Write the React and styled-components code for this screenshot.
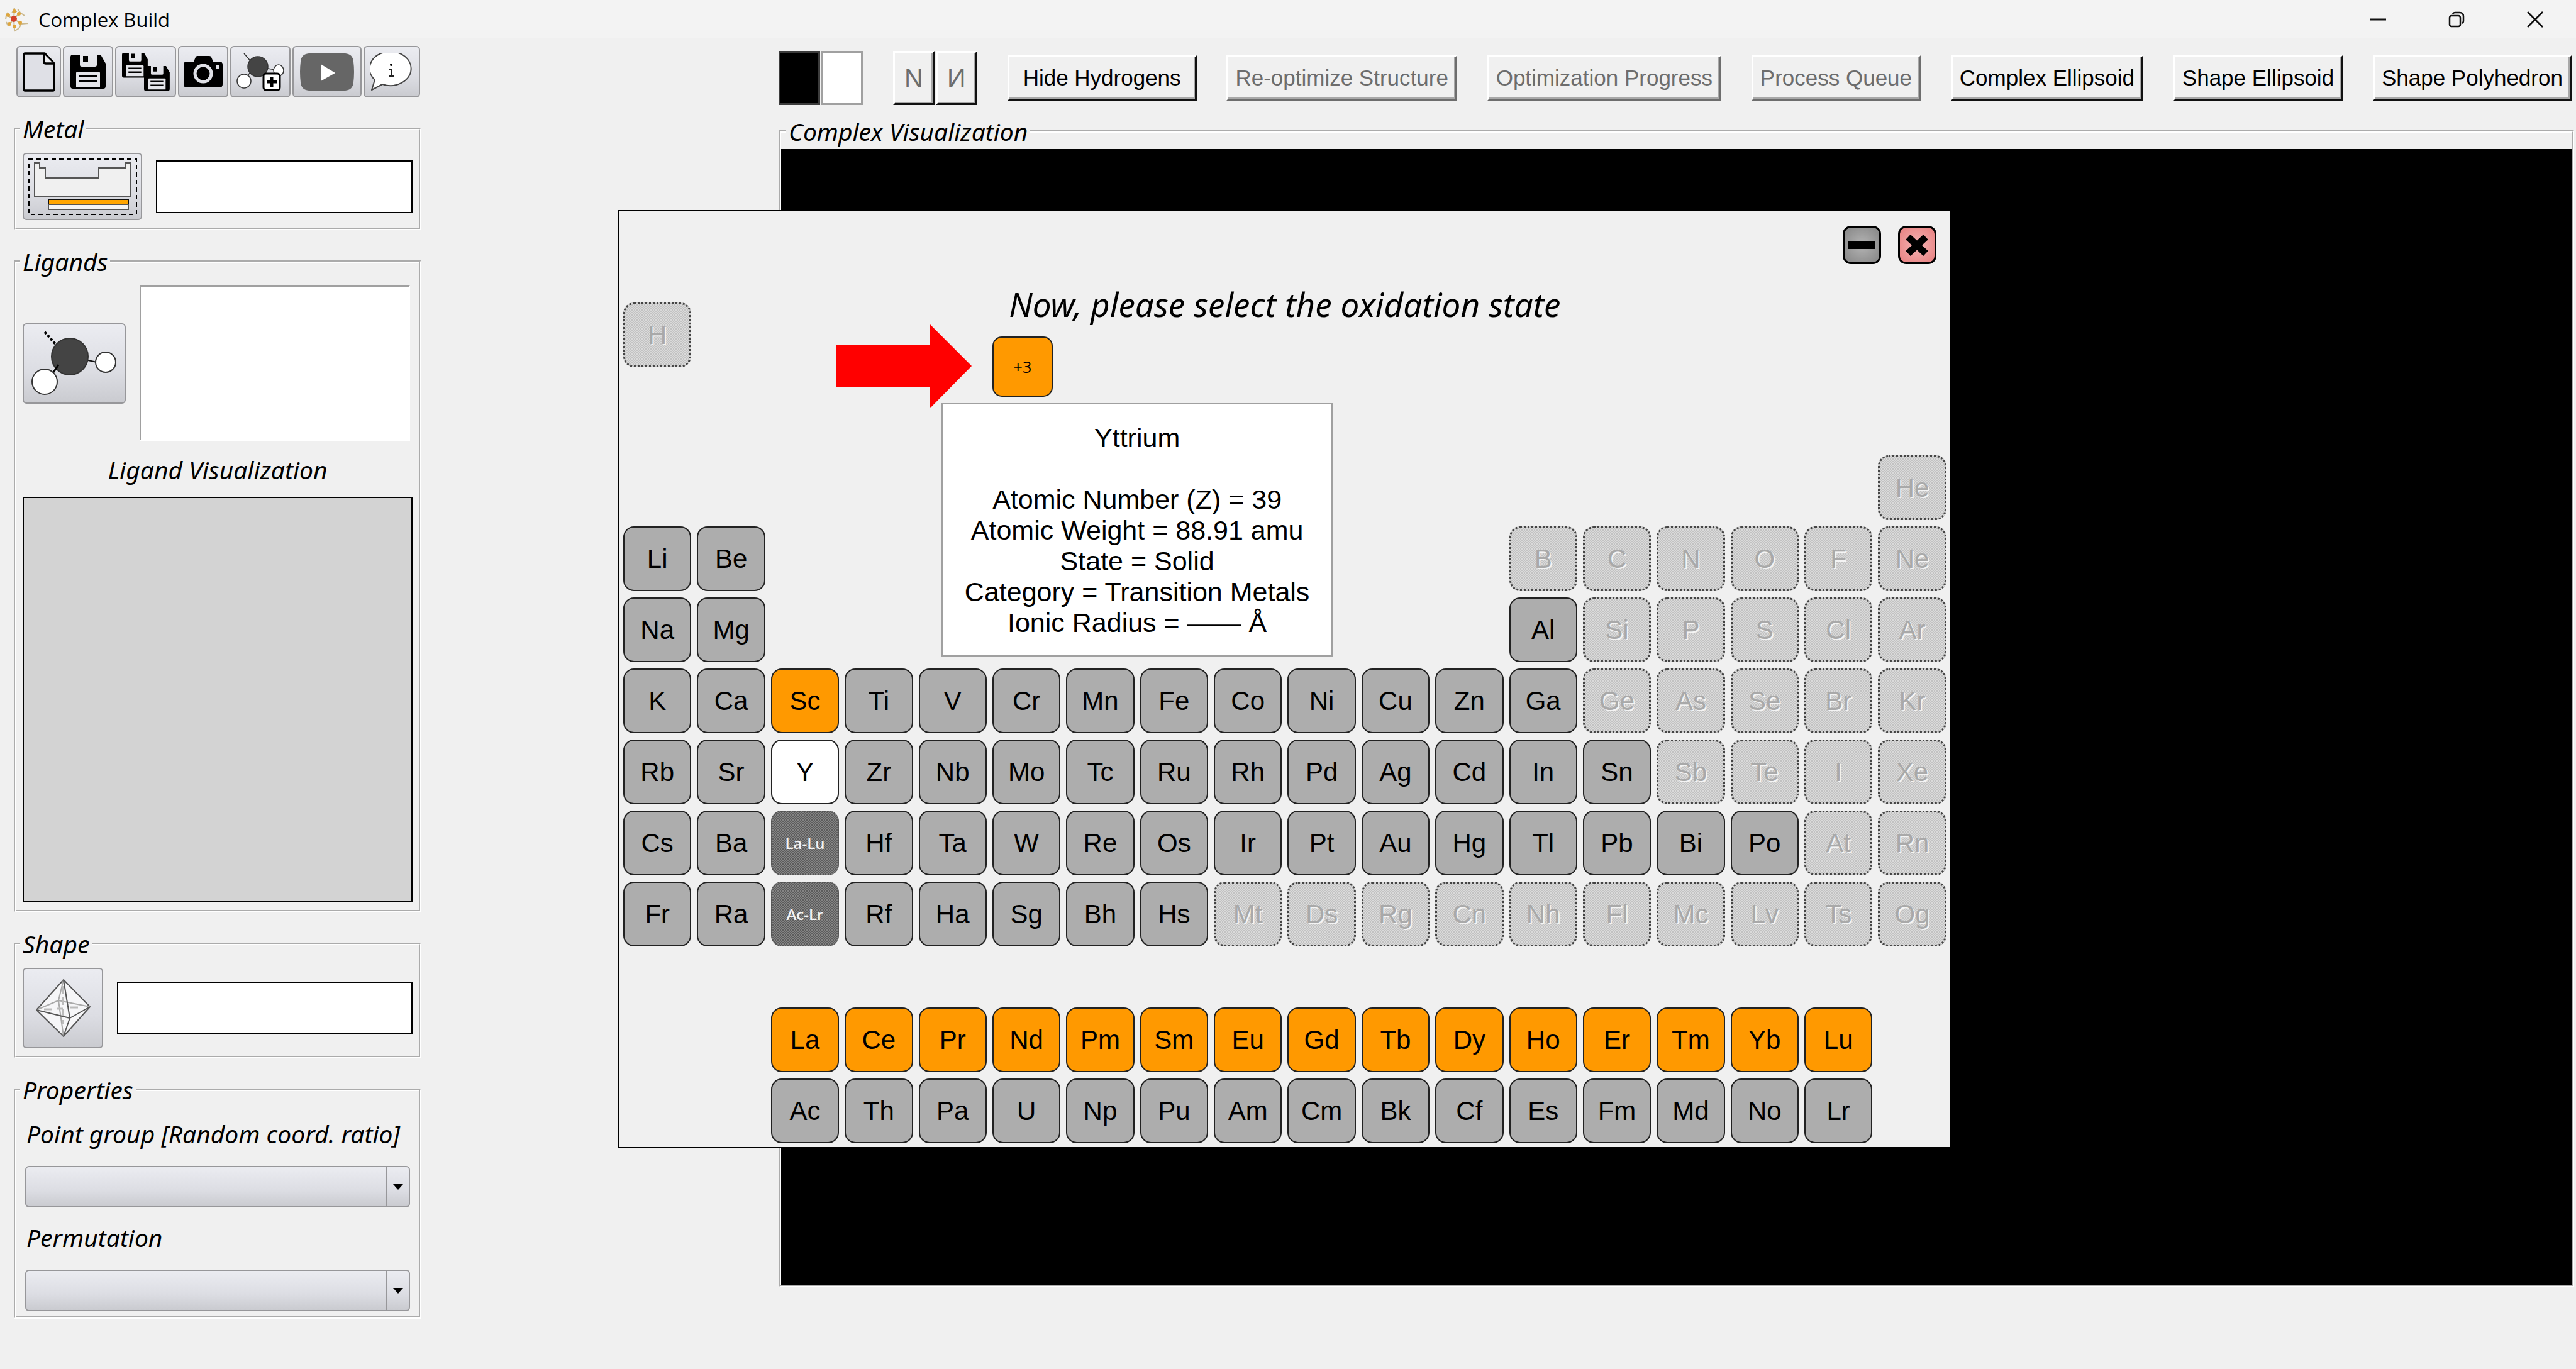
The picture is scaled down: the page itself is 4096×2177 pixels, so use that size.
import React from 'react'
import styled, { createGlobalStyle, css } from 'styled-components'

const sans = "'Liberation Sans', Arial, sans-serif"
const human = "'Open Sans', 'Noto Sans', sans-serif"
const slanted = "'Noto Sans', 'Open Sans', sans-serif"

const GlobalStyle = createGlobalStyle`
  * {
    box-sizing: border-box;
  }
  body {
    margin: 0;
    background: #f0f0f0;
    color: #000;
    font-family: ${sans};
  }
  button,
  input,
  select {
    margin: 0;
    font-family: inherit;
    color: inherit;
  }
`

const Page = styled.div`
  position: relative;
  display: flex;
  flex-direction: column;
  min-height: 100vh;
`

const TitleBar = styled.header`
  display: flex;
  align-items: center;
  height: 61px;
  padding: 0 52px 0 8px;
  background: #f3f3f3;
`

const AppTitle = styled.h1`
  flex: 1;
  margin: 0 0 0 15px;
  font: 400 31px/40px ${human};
`

const WindowControls = styled.div`
  display: flex;
  gap: 99px;
`

const WindowControl = styled.button`
  display: flex;
  padding: 0;
  border: 0;
  background: none;
`

const Body = styled.div`
  display: flex;
  flex: 1;
  gap: 568px;
  padding: 12px 3px 72px 22px;
`

const Sidebar = styled.aside`
  flex: 0 0 648px;
  min-width: 0;
`

const Toolbar = styled.div`
  display: flex;
  gap: 3px;
  padding: 0 2px 0 4px;
`

const silver = css`
  border: 2px solid #97979a;
  border-radius: 6px;
  background: linear-gradient(#ebecf1, #dcdde3 60%, #cacbd0);
`

const ToolButton = styled.button`
  display: flex;
  flex: none;
  align-items: center;
  justify-content: center;
  width: ${({ $width }) => $width}px;
  height: ${({ $height }) => $height || 82}px;
  padding: 0;
  ${silver}
`

const Group = styled.fieldset`
  min-width: 0;
  margin: 28px 0 0;
  padding: 16px 10px 12px;
  border: 4px groove #fff;
`

const PropertiesGroup = styled(Group)`
  padding: 0 10px 8px;
`

const Legend = styled.legend`
  margin-left: -4px;
  padding: 0 4px;
  font: italic 400 39px/44px ${slanted};
`

const Row = styled.div`
  display: flex;
  align-items: center;
  gap: 22px;
`

const TextBox = styled.input`
  flex: 1;
  min-width: 0;
  height: 84px;
  padding: 0 12px;
  border: 2px solid #000;
  background: #fff;
  font-size: 38px;
`

const LigandList = styled.div`
  flex: 1;
  height: 247px;
  margin-right: 4px;
  border: 2px solid #fff;
  border-top-color: #a0a0a0;
  border-left-color: #a0a0a0;
  background: #fff;
`

const Caption = styled.p`
  margin: 24px 0 21px;
  text-align: center;
  font: italic 400 39px/44px ${slanted};
`

const LigandCanvas = styled.div`
  height: 645px;
  border: 2px solid #000;
  background: #d3d3d3;
`

const FieldLabel = styled.label`
  display: block;
  padding: 26px 6px 29px;
  font: italic 400 39px/44px ${slanted};
`

const SelectWrap = styled.div`
  position: relative;
  margin: 0 4px;
`

const Select = styled.select`
  display: block;
  width: 100%;
  height: 66px;
  padding: 0 46px 0 12px;
  appearance: none;
  font-size: 38px;
  ${silver}
`

const SelectArrow = styled.span`
  position: absolute;
  top: 2px;
  right: 2px;
  bottom: 2px;
  display: flex;
  align-items: center;
  justify-content: center;
  width: 36px;
  border-left: 2px solid #97979a;
  pointer-events: none;

  &::after {
    content: '';
    border: 8px solid transparent;
    border-top: 9px solid #000;
    border-bottom: 0;
  }
`

const Main = styled.main`
  display: flex;
  flex: 1;
  flex-direction: column;
  min-width: 0;
  margin-bottom: 58px;
`

const ViewToolbar = styled.div`
  display: flex;
  align-items: center;
  justify-content: space-between;
  padding: 8px 4px 0 0;
`

const ButtonPair = styled.div`
  display: flex;
  gap: 2px;
`

const Swatch = styled.button`
  width: 66px;
  height: 86px;
  padding: 0;
  border: 3px solid ${({ $color }) => ($color === '#000' ? '#3c3c3c' : '#a0a0a0')};
  background: ${({ $color }) => $color};
`

const RaisedButton = styled.button`
  height: ${({ $tall }) => ($tall ? 86 : 72)}px;
  padding: 0 ${({ $pad }) => $pad || 11}px;
  border: solid;
  border-width: 3px;
  border-color: #fff #111 #111 #fff;
  background: #f0f0f0;
  box-shadow: inset -2px -2px #a8a8a8;
  font-size: ${({ $tall }) => ($tall ? 41 : 35)}px;
  white-space: nowrap;

  &:disabled {
    border-color: #fff #6d6d6d #6d6d6d #fff;
    color: #6d6d6d;
  }
`

const FlipButton = styled(RaisedButton)`
  width: 66px;
  padding: 0;
  color: #6d6d6d;
`

const ViewGroup = styled(Group)`
  display: flex;
  flex: 1;
  flex-direction: column;
  margin-top: 20px;
  padding: 6px 0 0;
`

const ViewLegend = styled(Legend)`
  margin-left: 8px;
`

const Viewport = styled.div`
  flex: 1;
  background: #000;
`

const Dialog = styled.section`
  position: absolute;
  top: 334px;
  left: 24%;
  right: 24.25%;
  padding: 23px 6px 6px;
  border: 2px solid #000;
  background: #f0f0f0;
`

const DialogButtons = styled.div`
  display: flex;
  justify-content: flex-end;
  gap: 27px;
  padding-right: 16px;
`

const DialogButton = styled.button`
  display: flex;
  align-items: center;
  justify-content: center;
  width: 61px;
  height: 61px;
  padding: 0;
  border: 3px solid #000;
  border-radius: 13px;
  background: ${({ $close }) =>
    $close ? 'radial-gradient(#f3b4b4, #e87f7f)' : 'radial-gradient(#b4b4b4, #858585)'};
`

const Prompt = styled.h2`
  margin: 34px 0 0;
  text-align: center;
  font: italic 400 53px/60px ${slanted};
`

const Table = styled.div`
  display: grid;
  grid-template-columns: repeat(18, 1fr);
  grid-template-rows: 233px repeat(7, 103px) 77px repeat(2, 103px);
  column-gap: 9px;
  row-gap: 10px;
  margin-top: -33px;
`

const tones = {
  metal: '#adadad',
  selected: '#ff9900',
  active: '#fff'
}

const Element = styled.button`
  grid-row: ${({ $row }) => $row};
  grid-column: ${({ $col }) => $col};
  height: 103px;
  padding: 0;
  border: 2px solid #222;
  border-radius: 17px;
  background: ${({ $tone }) => tones[$tone]};
  font-size: 42px;

  ${({ $tone }) =>
    $tone === 'off' &&
    css`
      border: 3px dotted #444;
      background: repeating-conic-gradient(#c2c2c2 0 25%, #dadada 0 50%) 0 0 / 4px 4px;
      color: #a9a9a9;
      text-shadow: 2px 2px #f4f4f4;
    `}

  ${({ $tone }) =>
    $tone === 'series' &&
    css`
      border: 2px dotted #555;
      background: repeating-conic-gradient(#5c5c5c 0 25%, #848484 0 50%) 0 0 / 4px 4px;
      color: #f4f4f4;
      font: 600 24px ${human};
    `}
`

const OxidationButton = styled.button`
  grid-row: 1;
  grid-column: 6;
  width: 96px;
  height: 96px;
  margin-top: 54px;
  padding: 0;
  border: 2px solid #222;
  border-radius: 15px;
  background: #ff9900;
  font: 400 25px ${human};
`

const Pointer = styled.svg`
  grid-row: 1;
  grid-column: 3 / 6;
  justify-self: end;
  width: 216px;
  height: 133px;
  margin: 35px 24px 0 0;
`

const ElementInfo = styled.div`
  z-index: 1;
  grid-row: 1 / 5;
  grid-column: 5 / 11;
  align-self: end;
  justify-self: center;
  width: 622px;
  margin-bottom: 9px;
  padding: 29px 0 27px;
  border: 2px solid #a0a0a0;
  background: #fff;
  text-align: center;
  font-size: 43px;
  line-height: 49px;

  p {
    margin: 0;
  }
  p:first-child {
    margin-bottom: 49px;
  }
`

// prettier-ignore
const rows = [
  { row: 1, start: 1, symbols: 'H' },
  { row: 2, start: 18, symbols: 'He' },
  { row: 3, start: 1, symbols: 'Li Be' },
  { row: 3, start: 13, symbols: 'B C N O F Ne' },
  { row: 4, start: 1, symbols: 'Na Mg' },
  { row: 4, start: 13, symbols: 'Al Si P S Cl Ar' },
  { row: 5, start: 1, symbols: 'K Ca Sc Ti V Cr Mn Fe Co Ni Cu Zn Ga Ge As Se Br Kr' },
  { row: 6, start: 1, symbols: 'Rb Sr Y Zr Nb Mo Tc Ru Rh Pd Ag Cd In Sn Sb Te I Xe' },
  { row: 7, start: 1, symbols: 'Cs Ba La-Lu Hf Ta W Re Os Ir Pt Au Hg Tl Pb Bi Po At Rn' },
  { row: 8, start: 1, symbols: 'Fr Ra Ac-Lr Rf Ha Sg Bh Hs Mt Ds Rg Cn Nh Fl Mc Lv Ts Og' },
  { row: 10, start: 3, symbols: 'La Ce Pr Nd Pm Sm Eu Gd Tb Dy Ho Er Tm Yb Lu' },
  { row: 11, start: 3, symbols: 'Ac Th Pa U Np Pu Am Cm Bk Cf Es Fm Md No Lr' }
]

const disabled =
  'H He B C N O F Ne Si P S Cl Ar Ge As Se Br Kr Sb Te I Xe At Rn Mt Ds Rg Cn Nh Fl Mc Lv Ts Og'.split(' ')

const getTone = (symbol, row) => {
  if (symbol.includes('-')) return 'series'
  if (symbol === 'Y') return 'active'
  if (symbol === 'Sc' || row === 10) return 'selected'
  return disabled.includes(symbol) ? 'off' : 'metal'
}

const elements = rows.flatMap(({ row, start, symbols }) =>
  symbols.split(' ').map((symbol, i) => ({ symbol, row, col: start + i, tone: getTone(symbol, row) }))
)

const info = [
  'Yttrium',
  'Atomic Number (Z) = 39',
  'Atomic Weight = 88.91 amu',
  'State = Solid',
  'Category = Transition Metals',
  'Ionic Radius = —— Å'
]

const viewButtons = [
  { label: 'Hide Hydrogens', pad: 22 },
  { label: 'Re-optimize Structure', off: true },
  { label: 'Optimization Progress', off: true },
  { label: 'Process Queue', off: true },
  { label: 'Complex Ellipsoid' },
  { label: 'Shape Ellipsoid' },
  { label: 'Shape Polyhedron' }
]

const Logo = () => (
  <svg width='38' height='42' viewBox='0 0 38 42' fill='none'>
    <path
      d='M14 20 15 3M14 20 2 14M14 20 5 31M14 20 15 38M14 20 26 28M14 20 24 10M15 3l-3 6 7-1M24 10l7 5M24 10l-4-6M2 14l2-4M2 14l-1 7M26 28l11-1M26 28l-4 7-8 5M5 31l-3-6'
      stroke='#cbb98f'
      strokeWidth='2'
    />
    <g fill='#dfa53c'>
      <circle cx='15' cy='8' r='3' />
      <circle cx='5' cy='14' r='3' />
      <circle cx='7' cy='28' r='3' />
      <circle cx='15' cy='32' r='3' />
      <circle cx='24' cy='26' r='3' />
      <circle cx='22' cy='12' r='3' />
    </g>
    <circle cx='14' cy='20' r='5' fill='#d4412a' />
  </svg>
)

const FileIcon = () => (
  <svg width='52' height='63' viewBox='0 0 52 63' fill='none' stroke='#000' strokeWidth='3.5' strokeLinejoin='round'>
    <path d='M4 2h31l15 16v41q0 2-2 2H4q-2 0-2-2V4q0-2 2-2z' fill='#dfe0e6' />
    <path d='M34 3v12q0 3 3 3h12' fill='#efeff2' />
  </svg>
)

const Floppy = () => (
  <>
    <path d='M4 0h11v16q0 3 3 3h21q3 0 3-3V0h6l8 14v36q0 4-4 4H4q-4 0-4-4V4q0-4 4-4z' />
    <path d='M20 2h8v10h-8z' />
    <path d='M9 29q0-2 2-2h34q2 0 2 2v22H9z' fill='#e4e5ea' />
    <path d='M14 34h28M14 42h28' stroke='#000' strokeWidth='3.5' />
  </>
)

const SaveIcon = () => (
  <svg width='56' height='54' viewBox='0 0 56 54'>
    <Floppy />
  </svg>
)

const SaveAllIcon = () => (
  <svg width='76' height='61' viewBox='0 0 76 61'>
    <g transform='scale(.73)'>
      <Floppy />
    </g>
    <g transform='translate(35 21) scale(.73)'>
      <Floppy />
    </g>
  </svg>
)

const CameraIcon = () => (
  <svg width='62' height='50' viewBox='0 0 62 50'>
    <path d='M5 9h11l3-7q1-2 3-2h19q2 0 3 2l3 7h10q5 0 5 5v31q0 5-5 5H5q-5 0-5-5V14q0-5 5-5z' />
    <circle cx='31' cy='28' r='13' fill='none' stroke='#dfe0e6' strokeWidth='5' />
    <path d='M51 15h5v5h-5z' fill='#dfe0e6' />
  </svg>
)

const AddMoleculeIcon = () => (
  <svg width='76' height='60' viewBox='0 0 76 60' stroke='#333' strokeWidth='1.5'>
    <path d='M12 1l12 14M22 31l-8 10M50 25l12 2' />
    <circle cx='34' cy='22' r='16' fill='#444' />
    <ellipse cx='67' cy='28' rx='8' ry='9' fill='#fff' />
    <circle cx='12' cy='45' r='11' fill='#fff' />
    <rect x='43' y='33' width='26' height='26' rx='4' fill='#fff' stroke='#000' strokeWidth='3' />
    <path d='M48 46h16M56 38v16' stroke='#000' strokeWidth='5' />
  </svg>
)

const PlayIcon = () => (
  <svg width='86' height='61' viewBox='0 0 86 61'>
    <path d='M14 1q29-2 58 0 12 1 13 13 2 16 0 33-1 12-13 13-29 2-58 0-12-1-13-13-2-17 0-33Q2 2 14 1z' fill='#666' />
    <path d='M33 18v27l23-13z' fill='#fff' />
  </svg>
)

const InfoIcon = () => (
  <svg width='68' height='60' viewBox='0 0 68 60'>
    <path d='M2 59l5-16A33 27 0 1 1 19 50z' fill='#fff' stroke='#444' strokeWidth='2' strokeLinejoin='round' />
    <circle cx='33' cy='19' r='2' />
    <path d='M30 26h4v11M29 37h9' fill='none' stroke='#222' strokeWidth='2' />
  </svg>
)

const MetalIcon = () => (
  <svg width='173' height='90' viewBox='0 0 173 90' stroke='#555' strokeWidth='2'>
    <rect x='1' y='1' width='171' height='88' fill='none' stroke='#000' strokeDasharray='7 5' />
    <path d='M10 7h8v8h9v16h85V15h43V7h8v53H10z' fill='#f0f0f0' />
    <rect x='32' y='65' width='127' height='8' fill='#ffa500' stroke='#111' />
    <rect x='32' y='73' width='127' height='8' fill='#f4f4f4' />
  </svg>
)

const LigandIcon = () => (
  <svg width='136' height='104' viewBox='0 0 136 104' stroke='#333' strokeWidth='2'>
    <path d='M21 2l18 20' stroke='#000' strokeWidth='4' strokeDasharray='4 3' />
    <path d='M90 47l14 3M44 54L34 67' stroke='#111' />
    <circle cx='61' cy='41' r='29' fill='#444' />
    <path d='M43 54L33 69' stroke='#000' strokeWidth='3' />
    <circle cx='118' cy='50' r='16' fill='#fff' />
    <circle cx='21' cy='81' r='20' fill='#fff' />
  </svg>
)

const PolyhedronIcon = () => (
  <svg width='88' height='94' viewBox='0 0 88 94' strokeLinejoin='round' fill='none'>
    <path d='M45 2L87 45 45 92 2 50z' fill='#f6f6f8' stroke='#555' strokeWidth='2' />
    <path d='M2 50l35-15 50 10M45 2l-8 33 8 57' stroke='#aaa' strokeWidth='2' />
    <path d='M14 49h12M34 48h10M56 46h14M44 12v60' stroke='#bbb' strokeWidth='3' strokeDasharray='12 6' />
    <path d='M2 50l53 13 32-18M45 2l10 61-10 29' stroke='#555' strokeWidth='2' />
  </svg>
)

const App = () => {
  return (
    <>
      <GlobalStyle />
      <Page>
        <TitleBar>
          <Logo />
          <AppTitle>Complex Build</AppTitle>
          <WindowControls>
            <WindowControl aria-label='Minimize'>
              <svg width='26' height='26' viewBox='0 0 26 26' stroke='#111' strokeWidth='3'>
                <path d='M0 13h26' />
              </svg>
            </WindowControl>
            <WindowControl aria-label='Restore'>
              <svg width='26' height='26' viewBox='0 0 26 26' fill='none' stroke='#111' strokeWidth='2.5'>
                <rect x='2' y='7' width='17' height='17' rx='3' />
                <path d='M7 4q1-2 4-2h7q6 0 6 6v7q0 3-2 4' />
              </svg>
            </WindowControl>
            <WindowControl aria-label='Close'>
              <svg width='26' height='26' viewBox='0 0 26 26' stroke='#111' strokeWidth='2.5'>
                <path d='M1 1l24 24M25 1L1 25' />
              </svg>
            </WindowControl>
          </WindowControls>
        </TitleBar>

        <Body>
          <Sidebar>
            <Toolbar>
              <ToolButton $width={71} aria-label='New'>
                <FileIcon />
              </ToolButton>
              <ToolButton $width={80} aria-label='Save'>
                <SaveIcon />
              </ToolButton>
              <ToolButton $width={97} aria-label='Save all'>
                <SaveAllIcon />
              </ToolButton>
              <ToolButton $width={80} aria-label='Screenshot'>
                <CameraIcon />
              </ToolButton>
              <ToolButton $width={96} aria-label='Add ligand'>
                <AddMoleculeIcon />
              </ToolButton>
              <ToolButton $width={110} aria-label='Tutorial'>
                <PlayIcon />
              </ToolButton>
              <ToolButton $width={90} aria-label='About'>
                <InfoIcon />
              </ToolButton>
            </Toolbar>

            <Group>
              <Legend>Metal</Legend>
              <Row>
                <ToolButton $width={190} $height={107} aria-label='Select metal'>
                  <MetalIcon />
                </ToolButton>
                <TextBox aria-label='Metal' />
              </Row>
            </Group>

            <Group>
              <Legend>Ligands</Legend>
              <Row>
                <ToolButton $width={164} $height={128} aria-label='Select ligand'>
                  <LigandIcon />
                </ToolButton>
                <LigandList />
              </Row>
              <Caption>Ligand Visualization</Caption>
              <LigandCanvas />
            </Group>

            <Group>
              <Legend>Shape</Legend>
              <Row>
                <ToolButton $width={128} $height={128} aria-label='Select shape'>
                  <PolyhedronIcon />
                </ToolButton>
                <TextBox aria-label='Shape' />
              </Row>
            </Group>

            <PropertiesGroup>
              <Legend>Properties</Legend>
              <FieldLabel htmlFor='pointGroup'>Point group [Random coord. ratio]</FieldLabel>
              <SelectWrap>
                <Select id='pointGroup' />
                <SelectArrow />
              </SelectWrap>
              <FieldLabel htmlFor='permutation'>Permutation</FieldLabel>
              <SelectWrap>
                <Select id='permutation' />
                <SelectArrow />
              </SelectWrap>
            </PropertiesGroup>
          </Sidebar>

          <Main>
            <ViewToolbar>
              <ButtonPair>
                <Swatch $color='#000' aria-label='Black background' />
                <Swatch $color='#fff' aria-label='White background' />
              </ButtonPair>
              <ButtonPair>
                <FlipButton $tall>N</FlipButton>
                <FlipButton $tall>И</FlipButton>
              </ButtonPair>
              {viewButtons.map(({ label, pad, off }) => (
                <RaisedButton key={label} $pad={pad} disabled={off}>
                  {label}
                </RaisedButton>
              ))}
            </ViewToolbar>
            <ViewGroup>
              <ViewLegend>Complex Visualization</ViewLegend>
              <Viewport />
            </ViewGroup>
          </Main>
        </Body>

        <Dialog>
          <DialogButtons>
            <DialogButton aria-label='Minimize'>
              <svg width='42' height='12' viewBox='0 0 42 12'>
                <rect width='42' height='12' />
              </svg>
            </DialogButton>
            <DialogButton $close aria-label='Close'>
              <svg width='36' height='34' viewBox='0 0 36 34' stroke='#000' strokeWidth='11'>
                <path d='M4 4l28 26M32 4L4 30' />
              </svg>
            </DialogButton>
          </DialogButtons>
          <Prompt>Now, please select the oxidation state</Prompt>
          <Table>
            {elements.map(({ symbol, row, col, tone }) => (
              <Element key={symbol} $row={row} $col={col} $tone={tone} disabled={tone === 'off'}>
                {symbol}
              </Element>
            ))}
            <Pointer viewBox='0 0 216 133'>
              <path d='M0 33h150V0l66 66-66 67v-33H0z' fill='#f00' />
            </Pointer>
            <OxidationButton>+3</OxidationButton>
            <ElementInfo>
              {info.map((line) => (
                <p key={line}>{line}</p>
              ))}
            </ElementInfo>
          </Table>
        </Dialog>
      </Page>
    </>
  )
}

export default App
